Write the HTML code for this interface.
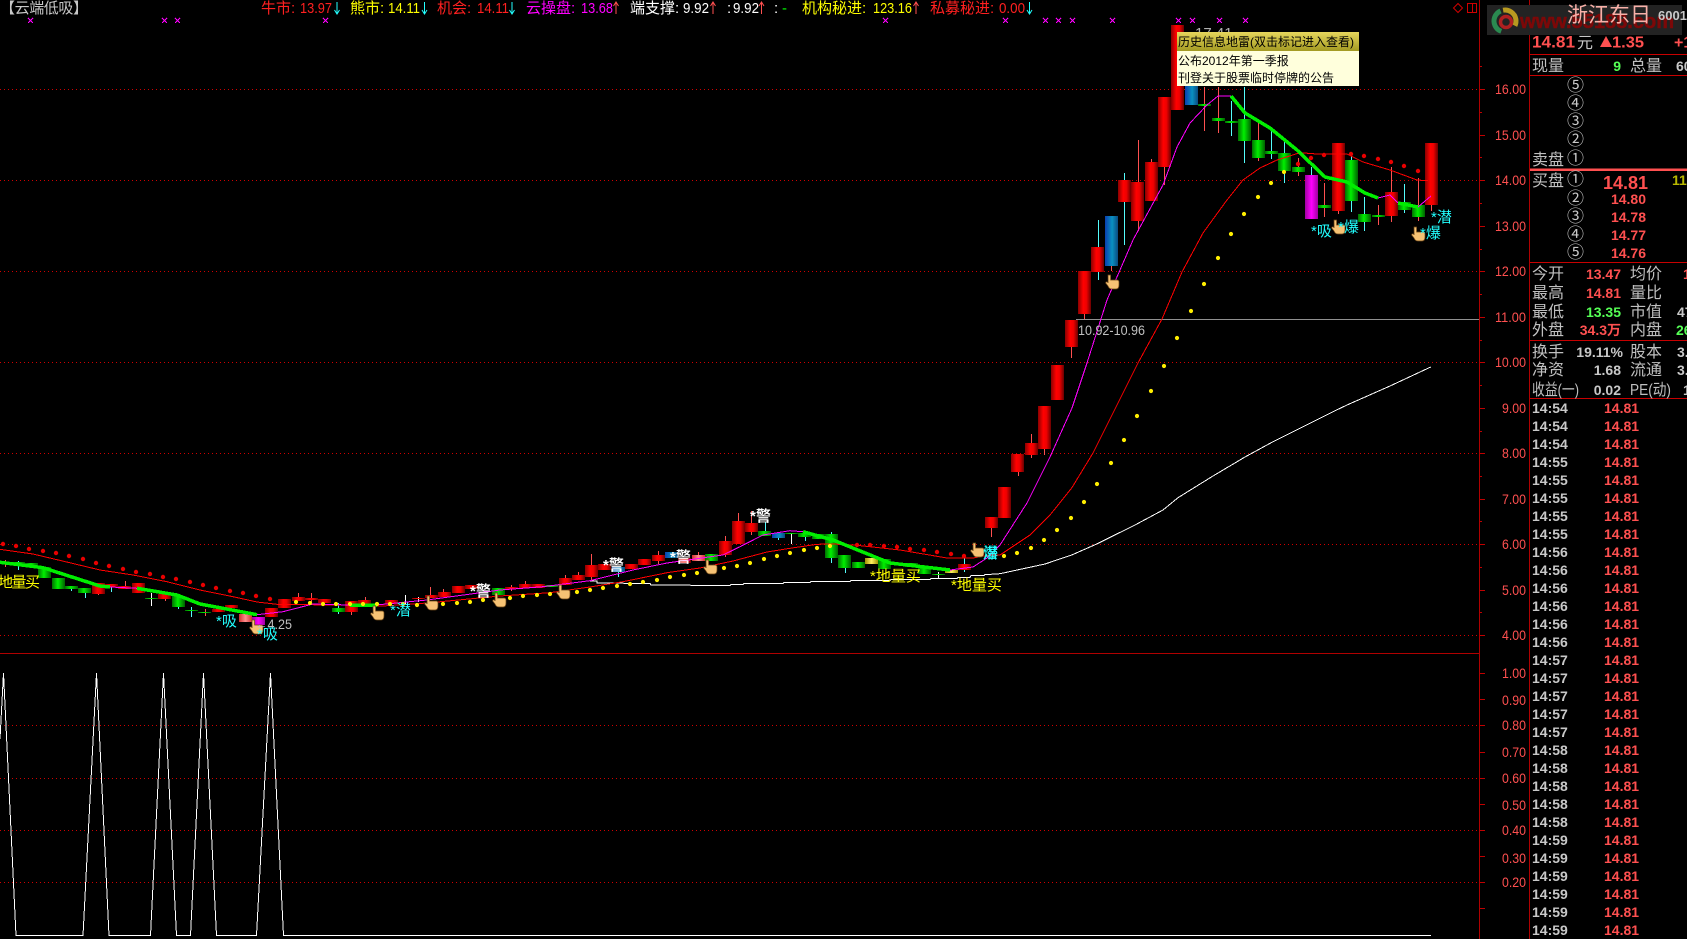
<!DOCTYPE html>
<html><head><meta charset="utf-8"><title>云端低吸</title>
<style>
html,body{margin:0;padding:0;background:#000;width:1687px;height:939px;overflow:hidden}
svg{display:block}
text{font-family:"Liberation Sans","WenQuanYi Zen Hei","Noto Sans CJK SC",sans-serif;white-space:pre}
.c rect{width:13px}
.cr{shape-rendering:crispEdges}
.l{font-size:15px}
.n{font-size:14px;fill:#ff5050}
.t text{font-size:15px}
.p text{font-size:16px;fill:#c0c0c0}
.b text{font-size:14px;font-weight:bold}
.q text{font-size:17px;fill:#c8c8c8;text-anchor:middle}
.cy{font-size:15px;fill:#2ff}
.ye{font-size:15px;fill:#ff0}
.wh{font-size:15px;fill:#fff;font-weight:bold}
</style></head><body>
<svg width="1687" height="939" viewBox="0 0 1687 939" xmlns="http://www.w3.org/2000/svg">
<defs>
<linearGradient id="r"><stop offset="0" stop-color="#8a0000"/><stop offset=".4" stop-color="#ff0000"/><stop offset=".65" stop-color="#f00000"/><stop offset="1" stop-color="#6a0000"/></linearGradient>
<linearGradient id="g"><stop offset="0" stop-color="#007000"/><stop offset=".45" stop-color="#00f000"/><stop offset="1" stop-color="#006000"/></linearGradient>
<linearGradient id="b"><stop offset="0" stop-color="#0a3fb0"/><stop offset=".55" stop-color="#0a90c0"/><stop offset="1" stop-color="#0a4a80"/></linearGradient>
<linearGradient id="m"><stop offset="0" stop-color="#a000a0"/><stop offset=".5" stop-color="#ff00ff"/><stop offset="1" stop-color="#a000a0"/></linearGradient>
<linearGradient id="pk"><stop offset="0" stop-color="#d03030"/><stop offset=".5" stop-color="#ff9090"/><stop offset="1" stop-color="#d03030"/></linearGradient>
<linearGradient id="y"><stop offset="0" stop-color="#a09000"/><stop offset=".5" stop-color="#fff060"/><stop offset="1" stop-color="#a09000"/></linearGradient>
<linearGradient id="hd" x2="0" y2="1"><stop offset="0" stop-color="#e6d65c"/><stop offset="1" stop-color="#a39a22"/></linearGradient>
<path id="h" d="M-4-7h2.6v5h6.4q2 0 2 2v3q0 4-3 4h-4q-3 0-4-3l-2.4-3q0-1.5 1.5-1l1 .5z" fill="#f6c274" stroke="#6a4416" stroke-width=".7"/>
<path id="ad" d="M0 0V12M-2.5 8L0 12L2.5 8" fill="none" stroke="#2ff" stroke-width="1"/>
<path id="au" d="M0 12V0M-2.5 4L0 0L2.5 4" fill="none" stroke="#ff5050" stroke-width="1"/>
<path id="x" class="cr" d="M-2.5-2.5L2.5 2.5M2.5-2.5L-2.5 2.5" stroke="#f0f" stroke-width="1" fill="none"/>
</defs>
<rect width="1687" height="939" fill="#000"/>

<!-- grid -->
<path class="cr" d="M0 89.5H1479M0 180.5H1479M0 271.5H1479M0 362.5H1479M0 453.5H1479M0 544.5H1479M0 635.5H1479M0 725.5H1479M0 778.5H1479M0 830.5H1479M0 882.5H1479" stroke="#d00000" stroke-width="1" stroke-dasharray="1 3" fill="none"/>
<path class="cr" d="M1076 319.5H1479" stroke="#909090" fill="none"/>
<path class="cr" d="M0 653.5H1480M1479.5 0V939M1529.5 0V939" stroke="#b00000" fill="none"/>

<!-- axis ticks -->
<path class="cr" d="M1480 89.5h5M1480 135.5h5M1480 180.5h5M1480 226.5h5M1480 271.5h5M1480 317.5h5M1480 362.5h5M1480 408.5h5M1480 453.5h5M1480 499.5h5M1480 544.5h5M1480 590.5h5M1480 635.5h5M1480 66.5h2M1480 112.5h2M1480 157.5h2M1480 203.5h2M1480 249.5h2M1480 294.5h2M1480 340.5h2M1480 385.5h2M1480 431.5h2M1480 476.5h2M1480 521.5h2M1480 567.5h2M1480 612.5h2M1480 673.5h5M1480 699.5h5M1480 725.5h5M1480 752.5h5M1480 778.5h5M1480 804.5h5M1480 830.5h5M1480 856.5h5M1480 882.5h5M1480 908.5h5" stroke="#c00000" fill="none"/>
<g class="n">
<text x="1495" y="94" class="n" textLength="31" lengthAdjust="spacingAndGlyphs">16.00</text>
<text x="1495" y="140" class="n" textLength="31" lengthAdjust="spacingAndGlyphs">15.00</text>
<text x="1495" y="185" class="n" textLength="31" lengthAdjust="spacingAndGlyphs">14.00</text>
<text x="1495" y="231" class="n" textLength="31" lengthAdjust="spacingAndGlyphs">13.00</text>
<text x="1495" y="276" class="n" textLength="31" lengthAdjust="spacingAndGlyphs">12.00</text>
<text x="1495" y="322" class="n" textLength="31" lengthAdjust="spacingAndGlyphs">11.00</text>
<text x="1495" y="367" class="n" textLength="31" lengthAdjust="spacingAndGlyphs">10.00</text>
<text x="1502" y="413" class="n" textLength="24" lengthAdjust="spacingAndGlyphs">9.00</text>
<text x="1502" y="458" class="n" textLength="24" lengthAdjust="spacingAndGlyphs">8.00</text>
<text x="1502" y="504" class="n" textLength="24" lengthAdjust="spacingAndGlyphs">7.00</text>
<text x="1502" y="549" class="n" textLength="24" lengthAdjust="spacingAndGlyphs">6.00</text>
<text x="1502" y="595" class="n" textLength="24" lengthAdjust="spacingAndGlyphs">5.00</text>
<text x="1502" y="640" class="n" textLength="24" lengthAdjust="spacingAndGlyphs">4.00</text>
<text x="1502" y="678" class="n" textLength="24" lengthAdjust="spacingAndGlyphs">1.00</text>
<text x="1502" y="705" class="n" textLength="24" lengthAdjust="spacingAndGlyphs">0.90</text>
<text x="1502" y="730" class="n" textLength="24" lengthAdjust="spacingAndGlyphs">0.80</text>
<text x="1502" y="757" class="n" textLength="24" lengthAdjust="spacingAndGlyphs">0.70</text>
<text x="1502" y="783" class="n" textLength="24" lengthAdjust="spacingAndGlyphs">0.60</text>
<text x="1502" y="810" class="n" textLength="24" lengthAdjust="spacingAndGlyphs">0.50</text>
<text x="1502" y="835" class="n" textLength="24" lengthAdjust="spacingAndGlyphs">0.40</text>
<text x="1502" y="863" class="n" textLength="24" lengthAdjust="spacingAndGlyphs">0.30</text>
<text x="1502" y="887" class="n" textLength="24" lengthAdjust="spacingAndGlyphs">0.20</text>
</g>

<!-- wicks -->
<path class="cr" fill="none" stroke="#ff5050" d="M1431.5 205V211M1418.5 178V221M1391.5 167V222M1378.5 205V225M1338.5 143V214M1324.5 183V217M1298.5 158V176M1258.5 123V161M1218.5 87V133M1204.5 87V131M1164.5 167V185M1151.5 159V162M1138.5 140V231M1111.5 266V271M1084.5 314V319M1071.5 347V358M1044.5 449V455M1031.5 434V458M1018.5 472V476M991.5 528V537M751.5 511V535M738.5 513V521M725.5 536V557M698.5 552V561M658.5 551V564M591.5 554V580M578.5 572V576M565.5 575V585M525.5 581V584M511.5 585V591M443.5 589V592M430.5 587V598M311.5 593V602M298.5 593V597M351.5 612V615M365.5 597V600M205.5 609V616M165.5 599V601M125.5 581V589M98.5 594V595M5.5 560V567"/>
<path class="cr" fill="none" stroke="#54fcfc" d="M1404.5 184V213M1364.5 197V231M1351.5 152V212M1311.5 167V175M1284.5 142V183M1271.5 130V159M1244.5 87V163M1231.5 101V136M1124.5 173V245M1098.5 220V280M964.5 558V572M845.5 568V573M831.5 532V563M805.5 537V541M778.5 538V540M765.5 522V536M618.5 572V577M338.5 603V614M191.5 607V617M178.5 607V609M111.5 587V592M85.5 593V598M71.5 589V591M18.5 561V570"/>
<path class="cr" fill="none" stroke="#fff" d="M938.5 572V578M791.5 533V544M418.5 597V602M405.5 595V605M151.5 593V606"/>

<!-- candles -->
<g class="c cr">
<g fill="url(#r)">
<rect x="1425" y="143" height="62"/><rect x="1385" y="192" height="24"/><rect x="1332" y="143" height="68"/><rect x="1171" y="25" height="85"/><rect x="1158" y="97" height="70"/><rect x="1145" y="162" height="39"/><rect x="1131" y="182" height="39"/><rect x="1118" y="180" height="22"/><rect x="1091" y="247" height="25"/><rect x="1078" y="271" height="43"/><rect x="1065" y="320" height="27"/><rect x="1051" y="365" height="35"/><rect x="1038" y="406" height="43"/><rect x="1025" y="443" height="12"/><rect x="1011" y="454" height="18"/><rect x="998" y="487" height="31"/><rect x="985" y="517" height="11"/><rect x="958" y="564" height="6"/><rect x="745" y="523" height="9"/><rect x="732" y="521" height="23"/><rect x="719" y="541" height="14"/><rect x="678" y="558" height="5"/><rect x="652" y="555" height="6"/><rect x="638" y="559" height="6"/><rect x="625" y="564" height="5"/><rect x="598" y="564" height="6"/><rect x="585" y="565" height="12"/><rect x="572" y="575" height="5"/><rect x="559" y="578" height="7"/><rect x="532" y="584" height="4"/><rect x="519" y="584" height="4"/><rect x="505" y="587" height="2"/><rect x="465" y="585" height="4"/><rect x="452" y="586" height="7"/><rect x="438" y="592" height="5"/><rect x="425" y="595" height="3"/><rect x="412" y="598" height="1"/><rect x="385" y="600" height="4"/><rect x="372" y="604" height="1"/><rect x="358" y="600" height="7"/><rect x="345" y="601" height="11"/><rect x="318" y="599" height="4"/><rect x="305" y="598" height="2"/><rect x="292" y="597" height="4"/><rect x="278" y="599" height="9"/><rect x="265" y="608" height="9"/><rect x="225" y="605" height="3"/><rect x="212" y="609" height="3"/><rect x="158" y="594" height="5"/><rect x="132" y="583" height="10"/><rect x="118" y="586" height="3"/><rect x="105" y="584" height="3"/><rect x="92" y="583" height="11"/><rect x="-1" y="562" height="2"/>
</g>
<g fill="url(#g)">
<rect x="1412" y="205" height="12"/><rect x="1398" y="202" height="8"/><rect x="1372" y="215" height="2"/><rect x="1358" y="214" height="8"/><rect x="1345" y="160" height="41"/><rect x="1318" y="205" height="3"/><rect x="1292" y="167" height="5"/><rect x="1278" y="153" height="18"/><rect x="1265" y="151" height="3"/><rect x="1252" y="140" height="18"/><rect x="1238" y="119" height="22"/><rect x="1225" y="121" height="2"/><rect x="1212" y="118" height="3"/><rect x="1198" y="104" height="2"/><rect x="932" y="574" height="1"/><rect x="918" y="567" height="7"/><rect x="905" y="563" height="4"/><rect x="892" y="563" height="1"/><rect x="878" y="559" height="10"/><rect x="852" y="562" height="6"/><rect x="838" y="555" height="13"/><rect x="825" y="534" height="24"/><rect x="812" y="534" height="5"/><rect x="798" y="533" height="4"/><rect x="785" y="533" height="1"/><rect x="758" y="531" height="5"/><rect x="705" y="554" height="7"/><rect x="545" y="585" height="2"/><rect x="492" y="588" height="7"/><rect x="332" y="608" height="4"/><rect x="198" y="612" height="1"/><rect x="185" y="610" height="1"/><rect x="172" y="596" height="11"/><rect x="145" y="598" height="1"/><rect x="78" y="588" height="5"/><rect x="65" y="586" height="3"/><rect x="52" y="578" height="11"/><rect x="38" y="567" height="11"/><rect x="25" y="563" height="4"/><rect x="12" y="562" height="3"/>
</g>
<g fill="url(#b)"><rect x="1185" y="85" height="20"/><rect x="1105" y="216" height="50"/><rect x="772" y="533" height="5"/><rect x="665" y="552" height="6"/><rect x="612" y="567" height="5"/></g>
<g fill="url(#m)"><rect x="1305" y="175" height="44"/><rect x="252" y="617" height="8"/></g>
<g fill="url(#pk)"><rect x="692" y="555" height="6"/><rect x="239" y="614" height="8"/></g>
<g fill="url(#y)"><rect x="865" y="558" height="6"/><rect x="945" y="570" height="3"/></g>
</g>

<!-- MA lines -->
<g class="cr" fill="none">
<polyline stroke="#fff" points="590,581 597,581 597,583 623,583 624,583.5 650,583.5 651,585 690,585 691,585.6 730,585.6 731,584.6 743,584.6 744,583.3 783,583.3 784,582.3 810,582.3 811,581.3 850,581.3 851,580.3 890,580.3 891,579.3 930,579.3 931,578.3 957,578.3 958,577.3 970,577.3 971,575.7 984,575.7 985,574.7 1000,573.7 1045,564 1071.7,555 1096.7,544 1135,525 1163,510 1178,497.7 1213,476 1245,457 1273,441.7 1293,431.7 1333,411.7 1347,405 1390,386 1430.7,367"/>
<polyline stroke="#ff0000" points="0,549.3 33,554 66.7,562 100,570 133,575 167,581.7 200,590 233,596.7 257,602 277,604.3 333,605 383,606 427,603 500,596 550,592.7 590,587 623,581.7 667,572.7 700,568 733,561 767,552 790,548.3 817,544.3 833,544 857,545.3 900,550 947,558 973,558 990,555 1000,555 1030,535 1050,515 1071.7,488 1093,453 1123,393 1138,363 1162,319 1182,272 1203,233 1227,200 1243,180 1260,168 1277,160 1300,152.7 1317,154 1347,154 1363,162 1390,170 1417,180 1428,180.7"/>
<polyline stroke="#ff00ff" points="257,614.7 283,611.7 313,604 350,605 373,605.3 427,600 500,590 543,586.7 590,580.7 633,570 667,563 723,555 740,546.7 763,535 790,530.7 803,531.7"/>
<polyline stroke="#ff00ff" points="950,570 973,567 987,558 1000,545 1027,503 1050,457 1072,408 1087,363 1107,300 1133,240 1163,185 1177,147 1190,123 1207,105 1218,96 1231,96"/>
<polyline stroke="#ff00ff" points="110,587 137,588.3"/>
<polyline stroke="#ff00ff" points="1378,198 1390,195 1398,203"/>
<polyline stroke="#ff00ff" points="1418,207 1431,196"/>
<g stroke="#00ee00" stroke-width="3.5">
<polyline points="0,562.3 43,567.7 100,586 110,587"/>
<polyline points="137,588.3 177,595 200,604 257,614.7"/>
<polyline points="350,605 377,605"/>
<polyline points="803,531.7 833,540 890,563 950,570"/>
<polyline points="1231,96 1245,113 1270,128 1297,150 1325,177 1347,182 1365,193 1378,198"/>
<polyline points="1398,203 1418,207"/>
</g>
</g>

<!-- dots -->
<path fill="none" stroke="#e80000" stroke-width="4.4" stroke-linecap="round" d="M3 544h0M16 546h0M29 549h0M43 551h0M56 553h0M69 556h0M83 559h0M96 563h0M109 566h0M123 569h0M136 572h0M150 574h0M163 577h0M176 579h0M190 582h0M203 585h0M216 588h0M230 591h0M243 593h0M256 596h0M270 599h0M857 545h0M870 545h0M884 546h0M897 547h0M910 549h0M924 550h0M937 552h0M951 554h0M964 556h0M1298 164h0M1311 158h0M1324 155h0M1351 154h0M1364 156h0M1378 159h0M1391 162h0M1404 166h0M1418 171h0"/>
<path fill="none" stroke="#ffee00" stroke-width="4.2" stroke-linecap="round" d="M296 602h0M310 603h0M323 604h0M336 604h0M350 604h0M363 604h0M377 604h0M390 604h0M403 604h0M417 605h0M430 604h0M443 604h0M457 603h0M470 602h0M483 600h0M497 600h0M510 598h0M523 596h0M537 595h0M550 594h0M563 593h0M577 592h0M590 590h0M603 588h0M617 586h0M630 584h0M643 582h0M657 580h0M670 577h0M684 575h0M697 573h0M711 571h0M724 568h0M737 566h0M750 563h0M764 559h0M777 556h0M790 553h0M804 550h0M817 548h0M830 546h0M1004 556h0M1017 553h0M1031 548h0M1044 540h0M1057 530h0M1071 518h0M1084 502h0M1097 484h0M1111 463h0M1124 440h0M1137 416h0M1151 391h0M1164 366h0M1177 338h0M1191 311h0M1204 284h0M1218 258h0M1231 234h0M1244 214h0M1258 197h0M1271 183h0M1284 172h0"/>

<!-- markers -->
<g>
<use href="#x" x="30.5" y="20.5"/><use href="#x" x="164.5" y="20.5"/><use href="#x" x="177.5" y="20.5"/><use href="#x" x="325.5" y="20.5"/><use href="#x" x="885.5" y="20.5"/><use href="#x" x="1005.5" y="20.5"/><use href="#x" x="1045.5" y="20.5"/><use href="#x" x="1058.5" y="20.5"/><use href="#x" x="1072.5" y="20.5"/><use href="#x" x="1112.5" y="20.5"/><use href="#x" x="1178.5" y="20.5"/><use href="#x" x="1192.5" y="20.5"/><use href="#x" x="1219.5" y="20.5"/><use href="#x" x="1245.5" y="20.5"/>
</g>

<!-- hands -->
<use href="#h" x="1112" y="282"/><use href="#h" x="1338" y="227"/><use href="#h" x="1418" y="234"/><use href="#h" x="256" y="627"/><use href="#h" x="377" y="613"/><use href="#h" x="431" y="603"/><use href="#h" x="499" y="600"/><use href="#h" x="563" y="592"/><use href="#h" x="710" y="567"/><use href="#h" x="977" y="550"/>

<!-- chart labels -->
<text class="ye" x="-2" y="587" textLength="42">地量买</text>
<text class="cy" x="216" y="626">*吸</text>
<text x="255" y="629" font-size="14" fill="#c0c0c0" textLength="37" lengthAdjust="spacingAndGlyphs">←4.25</text>
<text class="cy" x="257" y="639">*吸</text>
<text class="cy" x="390" y="615">*潜</text>
<text class="wh" x="470" y="596">*警</text>
<text class="wh" x="603" y="570">*警</text>
<text class="wh" x="670" y="562">*警</text>
<text class="wh" x="750" y="521">*警</text>
<text class="ye" x="870" y="581">*地量买</text>
<text class="ye" x="951" y="590">*地量买</text>
<text class="cy" x="983" y="558">潜</text><text class="cy" x="983" y="558">爆</text>
<text class="cy" x="1311" y="236">*吸</text>
<text class="cy" x="1338" y="232">*爆</text>
<text class="cy" x="1431" y="222">*潜</text>
<text class="cy" x="1420" y="238">*爆</text>
<text x="1078" y="335" font-size="14" fill="#c0c0c0" textLength="67" lengthAdjust="spacingAndGlyphs">10.92-10.96</text>

<!-- lower indicator -->
<polyline class="cr" fill="none" stroke="#fff" points="0,739 3.5,673 16,935.5 83,935.5 96.5,673 109,935.5 150.5,935.5 163.5,673 176.5,935.5 190.5,935.5 203.5,673 216.5,935.5 256.5,935.5 270.5,673 283.5,935.5 1431,935.5"/>

<!-- top title bar -->
<g class="t">
<text x="0" y="13" fill="#c8c8c8" textLength="88">【云端低吸】</text>
<text x="261" y="13" fill="#ff2020">牛市:</text><text x="300" y="13" fill="#ff2020" textLength="32" lengthAdjust="spacingAndGlyphs">13.97</text>
<text x="350" y="13" fill="#ff0">熊市:</text><text x="388" y="13" fill="#ff0" textLength="32" lengthAdjust="spacingAndGlyphs">14.11</text>
<text x="437" y="13" fill="#ff2020">机会:</text><text x="477" y="13" fill="#ff2020" textLength="32" lengthAdjust="spacingAndGlyphs">14.11</text>
<text x="526" y="13" fill="#ff00ff">云操盘:</text><text x="581" y="13" fill="#ff00ff" textLength="32" lengthAdjust="spacingAndGlyphs">13.68</text>
<text x="630" y="13" fill="#fff">端支撑:</text><text x="683" y="13" fill="#fff" textLength="26" lengthAdjust="spacingAndGlyphs">9.92</text>
<text x="727" y="13" fill="#fff">:</text><text x="733" y="13" fill="#fff" textLength="26" lengthAdjust="spacingAndGlyphs">9.92</text>
<text x="774" y="13" fill="#fff">:</text><text x="782" y="13" fill="#0f0">-</text>
<text x="802" y="13" fill="#ff0">机构秘进:</text><text x="873" y="13" fill="#ff0" textLength="39" lengthAdjust="spacingAndGlyphs">123.16</text>
<text x="930" y="13" fill="#ff2020">私募秘进:</text><text x="999" y="13" fill="#ff2020" textLength="26" lengthAdjust="spacingAndGlyphs">0.00</text>
</g>
<use href="#ad" x="337" y="2"/><use href="#ad" x="424.5" y="2"/><use href="#ad" x="512" y="2"/><use href="#au" x="616" y="2"/><use href="#au" x="713" y="2"/><use href="#au" x="761.5" y="2"/><use href="#au" x="916" y="2"/><use href="#ad" x="1029.5" y="2"/>
<path d="M1458 3.5l4.5 4.5-4.5 4.5-4.5-4.5z" fill="none" stroke="#d00000"/>
<path class="cr" d="M1467.5 3.5h9v9h-9zM1472.5 3.5v9" fill="none" stroke="#d00000"/>

<!-- tooltip -->
<text x="1180" y="38" font-size="15" fill="#b0b0b0">←17.41</text>
<rect x="1177" y="32" width="182" height="19" fill="url(#hd)"/>
<rect x="1177" y="51" width="182" height="35" fill="#ffffdc"/>
<g font-size="12" fill="#000">
<text x="1178" y="46">历史信息地雷(双击标记进入查看)</text>
<text x="1178" y="65">公布2012年第一季报</text>
<text x="1178" y="82">刊登关于股票临时停牌的公告</text>
</g>

<!-- right panel header -->
<rect x="1487" y="5" width="195" height="30" fill="#232323"/>
<text x="1520" y="28" font-size="20" font-weight="bold" fill="#7c0808" stroke="#7c0808" stroke-width=".5" textLength="154" lengthAdjust="spacingAndGlyphs">www.55188.com</text>
<text x="1567" y="22" font-size="21" fill="#f8b0a8">浙江东日</text>
<text x="1658" y="20" font-size="13" font-weight="bold" fill="#c8c8c8">6001</text>
<circle cx="1505" cy="21" r="11" fill="none" stroke="#b89a20" stroke-width="5" stroke-dasharray="24 60" transform="rotate(-100 1505 21)"/>
<circle cx="1505" cy="21" r="11" fill="none" stroke="#2a8a50" stroke-width="5" stroke-dasharray="26 60" transform="rotate(110 1505 21)"/>
<circle cx="1506" cy="22" r="5.5" fill="none" stroke="#b02020" stroke-width="3.5"/>

<text x="1532" y="47.5" font-size="17" font-weight="bold" fill="#ff5050" textLength="43" lengthAdjust="spacingAndGlyphs">14.81</text>
<text x="1577" y="48" font-size="16" fill="#c8c8c8">元</text>
<path d="M1600 47l6-11 6 11z" fill="#ff5050"/>
<text x="1612" y="47.5" font-size="16" font-weight="bold" fill="#ff5050" textLength="32" lengthAdjust="spacingAndGlyphs">1.35</text>
<text x="1674" y="47.5" font-size="16" font-weight="bold" fill="#ff5050">+1</text>

<!-- panel separators -->
<path class="cr" d="M1530 54.5H1687M1530 75.5H1687M1530 262.5H1687M1530 340.5H1687M1530 398.5H1687" stroke="#c80000" fill="none"/>
<rect x="1530" y="168.5" width="157" height="2.5" fill="#ff5050"/>

<g class="p">
<text x="1532" y="71">现量</text><text x="1630" y="71">总量</text>
<text x="1532" y="165">卖盘</text><text x="1532" y="186">买盘</text>
<text x="1532" y="279">今开</text><text x="1630" y="279">均价</text>
<text x="1532" y="298">最高</text><text x="1630" y="298">量比</text>
<text x="1532" y="317">最低</text><text x="1630" y="317">市值</text>
<text x="1532" y="335">外盘</text><text x="1630" y="335">内盘</text>
<text x="1532" y="357">换手</text><text x="1630" y="357">股本</text>
<text x="1532" y="375">净资</text><text x="1630" y="375">流通</text>
<text x="1532" y="395" textLength="47" lengthAdjust="spacingAndGlyphs">收益(一)</text><text x="1630" y="395" textLength="41" lengthAdjust="spacingAndGlyphs">PE(动)</text>
</g>
<g class="q">
<text x="1575.5" y="91">⑤</text><text x="1575.5" y="109">④</text><text x="1575.5" y="127">③</text><text x="1575.5" y="145">②</text><text x="1575.5" y="164">①</text>
<text x="1575.5" y="185">①</text><text x="1575.5" y="204">②</text><text x="1575.5" y="222">③</text><text x="1575.5" y="240">④</text><text x="1575.5" y="258">⑤</text>
</g>
<g class="b" text-anchor="end">
<text x="1621" y="71" fill="#55ff55">9</text>
<text x="1648" y="189" style="font-size:18px" fill="#ff5050">14.81</text>
<text x="1646" y="204" fill="#ff5050">14.80</text>
<text x="1646" y="222" fill="#ff5050">14.78</text>
<text x="1646" y="240" fill="#ff5050">14.77</text>
<text x="1646" y="258" fill="#ff5050">14.76</text>
<text x="1621" y="279" fill="#ff5050">13.47</text>
<text x="1621" y="298" fill="#ff5050">14.81</text>
<text x="1621" y="317" fill="#55ff55">13.35</text>
<text x="1621" y="335" fill="#ff5050">34.3万</text>
<text x="1623" y="357" fill="#c8c8c8">19.11%</text>
<text x="1621" y="375" fill="#c8c8c8">1.68</text>
<text x="1621" y="395" fill="#c8c8c8">0.02</text>
</g>
<g class="b">
<text x="1676" y="71" fill="#c8c8c8">60</text>
<text x="1672" y="185" fill="#b8b800">11</text>
<text x="1683" y="279" fill="#ff5050">1</text>
<text x="1677" y="317" fill="#c8c8c8">47</text>
<text x="1676" y="335" fill="#55ff55">26</text>
<text x="1677" y="357" fill="#c8c8c8">3.</text>
<text x="1677" y="375" fill="#c8c8c8">3.</text>
<text x="1683" y="395" fill="#c8c8c8">1</text>
</g>

<!-- tick rows -->
<g class="b">
<g fill="#c8c8c8">
<text x="1532" y="413">14:54</text><text x="1532" y="431">14:54</text><text x="1532" y="449">14:54</text>
<text x="1532" y="467">14:55</text><text x="1532" y="485">14:55</text><text x="1532" y="503">14:55</text><text x="1532" y="521">14:55</text><text x="1532" y="539">14:55</text>
<text x="1532" y="557">14:56</text><text x="1532" y="575">14:56</text><text x="1532" y="593">14:56</text><text x="1532" y="611">14:56</text><text x="1532" y="629">14:56</text><text x="1532" y="647">14:56</text>
<text x="1532" y="665">14:57</text><text x="1532" y="683">14:57</text><text x="1532" y="701">14:57</text><text x="1532" y="719">14:57</text><text x="1532" y="737">14:57</text>
<text x="1532" y="755">14:58</text><text x="1532" y="773">14:58</text><text x="1532" y="791">14:58</text><text x="1532" y="809">14:58</text><text x="1532" y="827">14:58</text>
<text x="1532" y="845">14:59</text><text x="1532" y="863">14:59</text><text x="1532" y="881">14:59</text><text x="1532" y="899">14:59</text><text x="1532" y="917">14:59</text><text x="1532" y="935">14:59</text>
</g>
<g fill="#ff5050">
<text x="1604" y="413">14.81</text><text x="1604" y="431">14.81</text><text x="1604" y="449">14.81</text><text x="1604" y="467">14.81</text><text x="1604" y="485">14.81</text><text x="1604" y="503">14.81</text><text x="1604" y="521">14.81</text><text x="1604" y="539">14.81</text><text x="1604" y="557">14.81</text><text x="1604" y="575">14.81</text><text x="1604" y="593">14.81</text><text x="1604" y="611">14.81</text><text x="1604" y="629">14.81</text><text x="1604" y="647">14.81</text><text x="1604" y="665">14.81</text><text x="1604" y="683">14.81</text><text x="1604" y="701">14.81</text><text x="1604" y="719">14.81</text><text x="1604" y="737">14.81</text><text x="1604" y="755">14.81</text><text x="1604" y="773">14.81</text><text x="1604" y="791">14.81</text><text x="1604" y="809">14.81</text><text x="1604" y="827">14.81</text><text x="1604" y="845">14.81</text><text x="1604" y="863">14.81</text><text x="1604" y="881">14.81</text><text x="1604" y="899">14.81</text><text x="1604" y="917">14.81</text><text x="1604" y="935">14.81</text>
</g>
</g>
</svg>
</body></html>
